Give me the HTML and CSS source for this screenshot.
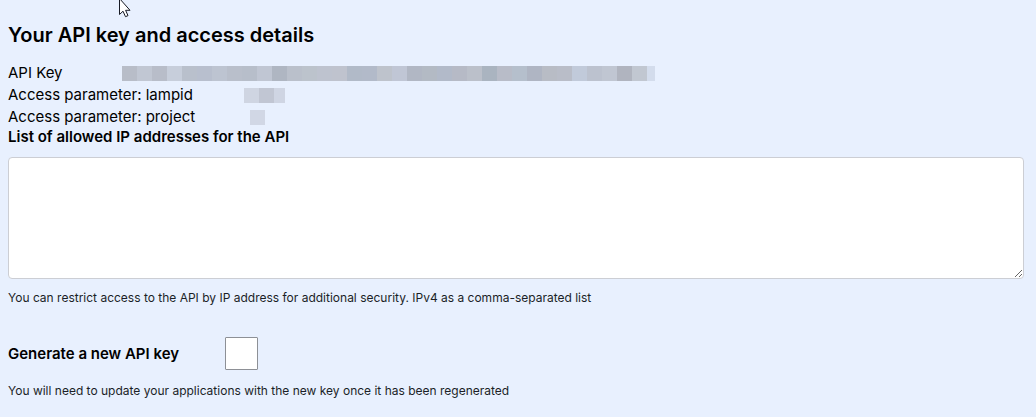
FILE: index.html
```html
<!DOCTYPE html>
<html lang="en">
<head>
<meta charset="utf-8">
<title>API access</title>
<link rel="stylesheet" href="styles.css">
</head>
<body>
<main class="panel">
  <h2 class="title">Your API key and access details</h2>
  <dl class="details">
    <div class="row">
      <dt class="key-label">API Key</dt>
      <dd class="value"><svg class="mask" width="533" height="15" shape-rendering="crispEdges" aria-hidden="true"><rect x="0" width="15" height="15" fill="#b8bdc8"/><rect x="15" width="15" height="15" fill="#c1c7d3"/><rect x="30" width="15" height="15" fill="#b8bdc9"/><rect x="45" width="15" height="15" fill="#c7cedb"/><rect x="60" width="15" height="15" fill="#b9c0cc"/><rect x="75" width="15" height="15" fill="#b8bfce"/><rect x="90" width="15" height="15" fill="#bdc4d1"/><rect x="105" width="15" height="15" fill="#b9bfcb"/><rect x="120" width="15" height="15" fill="#b7beca"/><rect x="135" width="15" height="15" fill="#c0c6d3"/><rect x="150" width="15" height="15" fill="#afb6c2"/><rect x="165" width="15" height="15" fill="#bac0cb"/><rect x="180" width="15" height="15" fill="#bcc3cc"/><rect x="195" width="15" height="15" fill="#bec3cf"/><rect x="210" width="15" height="15" fill="#bfc3ce"/><rect x="225" width="15" height="15" fill="#b1bac8"/><rect x="240" width="15" height="15" fill="#b2bac9"/><rect x="255" width="15" height="15" fill="#bec3cc"/><rect x="270" width="15" height="15" fill="#c0c6d5"/><rect x="285" width="15" height="15" fill="#b1b7c4"/><rect x="300" width="15" height="15" fill="#b3bac4"/><rect x="315" width="15" height="15" fill="#b2bac9"/><rect x="330" width="15" height="15" fill="#b6bac6"/><rect x="345" width="15" height="15" fill="#bbc0ca"/><rect x="360" width="15" height="15" fill="#aab4c0"/><rect x="375" width="15" height="15" fill="#b8bcc8"/><rect x="390" width="15" height="15" fill="#b5bfcc"/><rect x="405" width="15" height="15" fill="#afb5c3"/><rect x="420" width="15" height="15" fill="#b8bcc5"/><rect x="435" width="15" height="15" fill="#b9bdc8"/><rect x="450" width="15" height="15" fill="#c1cada"/><rect x="465" width="15" height="15" fill="#bcc2cf"/><rect x="480" width="15" height="15" fill="#c0c6d2"/><rect x="495" width="15" height="15" fill="#b0b4bf"/><rect x="510" width="15" height="15" fill="#c1c7d1"/><rect x="525" width="8" height="15" fill="#d3dcec"/></svg></dd>
    </div>
    <div class="row">
      <dt class="param-label">Access parameter: lampid</dt>
      <dd class="value"><svg class="mask" width="41" height="15" shape-rendering="crispEdges" aria-hidden="true"><rect width="15" height="15" fill="#cfd5e2"/><rect x="15" width="15" height="15" fill="#c1c6d3"/><rect x="30" width="11" height="15" fill="#cfd5e3"/></svg></dd>
    </div>
    <div class="row">
      <dt class="param-label wide">Access parameter: project</dt>
      <dd class="value"><svg class="mask" width="15" height="15" aria-hidden="true"><rect width="15" height="15" fill="#d1d7e5"/></svg></dd>
    </div>
  </dl>
  <label class="label" for="ips">List of allowed IP addresses for the API</label>
  <textarea class="ips" id="ips" aria-describedby="ips-hint"></textarea>
  <p class="hint" id="ips-hint">You can restrict access to the API by IP address for additional security. IPv4 as a comma-separated list</p>
  <div class="regenerate">
    <label class="label regenerate-label" for="regen">Generate a new API key</label>
    <input class="check" id="regen" type="checkbox" aria-describedby="regen-hint">
  </div>
  <p class="hint" id="regen-hint">You will need to update your applications with the new key once it has been regenerated</p>
</main>
<svg class="cursor" width="14" height="20" viewBox="0 0 14 20" aria-hidden="true"><path d="M1.5 -1.5V14.5L5 11.2L7.5 16.7L10 15.6L7.6 10.3H12Z" fill="#fff" stroke="#171a24" stroke-width="1"/></svg>
</body>
</html>
```
FILE: styles.css
```css
* {
  box-sizing: border-box;
}

body {
  margin: 0;
  background: #e8f0fe;
  color: #000;
  font-family: Inter, "Liberation Sans", sans-serif;
  font-size: 15px;
}

.panel {
  padding: 23px 12px 18px 8px;
}

.title {
  margin: 0 0 15px;
  font-size: 20px;
  font-weight: 600;
  line-height: 24px;
}

.details {
  margin: 0;
}

.row {
  display: flex;
  align-items: center;
  line-height: 22px;
}

.key-label {
  width: 114px;
}

.param-label {
  width: 236px;
}

.wide {
  width: 242px;
}

.value {
  margin: 0;
}

.mask {
  display: block;
}

.label {
  display: block;
  font-weight: 600;
  line-height: 18px;
}

.ips {
  display: block;
  width: 100%;
  height: 122px;
  margin: 11px 0;
  padding: 8px;
  border: 1px solid #ccced4;
  border-radius: 4px;
  background: #fff;
  font: inherit;
  resize: vertical;
}

.hint {
  margin: 0;
  color: #1b1f27;
  font-size: 12px;
  line-height: 16px;
}

.regenerate {
  display: flex;
  align-items: center;
  margin: 31px 0 13px;
}

.regenerate-label {
  width: 217px;
}

.check {
  appearance: none;
  width: 33px;
  height: 33px;
  margin: 0;
  border: 1px solid #8d9096;
  border-radius: 1px;
  background: #fff;
}

.check:checked {
  background: #3b6fd4;
}

.cursor {
  position: absolute;
  top: 0;
  left: 118px;
  pointer-events: none;
}
```
